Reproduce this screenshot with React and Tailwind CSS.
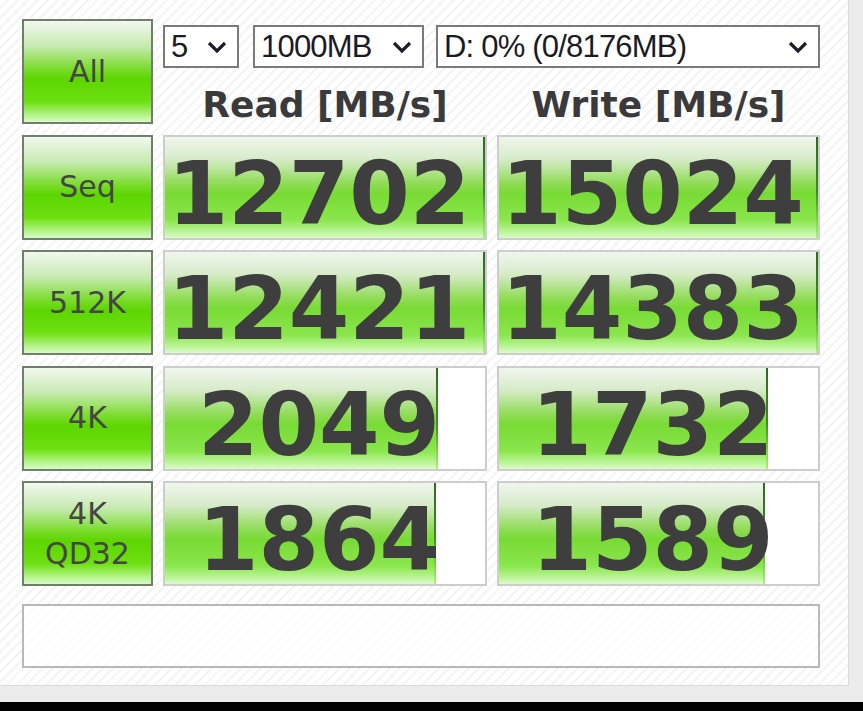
import React from "react";

const rows = [
    { label: ["Seq"], read: "12702", write: "15024", rw: 100, ww: 100 },
    { label: ["512K"], read: "12421", write: "14383", rw: 100, ww: 100 },
    { label: ["4K"], read: "2049", write: "1732", rw: 85.4, ww: 84.2 },
    { label: ["4K", "QD32"], read: "1864", write: "1589", rw: 84.6, ww: 83.5 },
];

function Chevron() {
    return (
        <svg width="20" height="12" viewBox="0 0 20 12" className="shrink-0">
            <polyline points="2,2 10,10 18,2" fill="none" stroke="#1e1e2a" strokeWidth="3.2" />
        </svg>
    );
}

function Select({ value, className }) {
    return (
        <div className={"flex h-[43px] items-center justify-between border-2 border-[#7a7a7a] bg-white pl-[6px] pr-[10px] " + className}>
            <span className="text-[31px] leading-none tracking-[-0.8px] text-[#1b1b24] font-['Liberation_Sans',sans-serif]">{value}</span>
            <Chevron />
        </div>
    );
}

function GreenButton({ lines }) {
    return (
        <div className="flex h-[105px] flex-col items-center justify-center border-2 border-[#6f7f6b] bg-[linear-gradient(180deg,#f2f8ef_0%,#c6eab0_25%,#78dc28_48%,#5cd600_58%,#6ee012_80%,#b9f591_94%,#d8fbc4_100%)] text-[30px] leading-[40px] text-[#454545] font-['DejaVu_Sans',sans-serif]">
            {lines.map((l) => (
                <span key={l}>{l}</span>
            ))}
        </div>
    );
}

function Result({ value, width }) {
    return (
        <div className="relative h-[105px] border-2 border-[#cdcdcd] bg-white">
            <div
                className="absolute left-0 top-0 h-full bg-[linear-gradient(180deg,#f1f6ee_0%,#d6ebc8_22%,#8fdc56_46%,#78db34_56%,#8ae64c_82%,#bdf59a_94%,#dcfbc8_100%)]"
                style={{ width: width + "%" }}
            >
                <div className="absolute right-0 top-0 h-full w-[2px] bg-[linear-gradient(180deg,#2f6a22_0%,#3f8a2a_55%,#7ce040_85%,#a8f07a_100%)]" />
            </div>
            <div className="relative flex h-full items-center justify-center pr-[12px] pt-[14px] text-[87px] font-bold leading-none text-[#3e3e3e] font-['DejaVu_Sans',sans-serif]">
                {value}
            </div>
        </div>
    );
}

export default function App() {
    return (
        <div className="flex h-[711px] w-[863px] flex-col bg-black">
            <div className="flex h-[702px] bg-[#ececec]">
                <div className="h-[686px] w-[849px] border-r border-b border-[#dadada] bg-[repeating-linear-gradient(135deg,#ffffff_0px,#ffffff_5px,#f4f4f4_5px,#f4f4f4_7px)] pl-[22px] pt-[19px]">
                    <div className="grid w-[798px] grid-cols-[131px_324px_323px] gap-x-[10px] gap-y-[10.5px]">
                        <GreenButton lines={["All"]} />
                        <div className="col-span-2 flex h-[105px] flex-col pt-[6px]">
                            <div className="flex items-center">
                                <Select value="5" className="w-[76px]" />
                                <Select value="1000MB" className="ml-[14px] w-[171px]" />
                                <Select value="D: 0% (0/8176MB)" className="ml-[12px] flex-1" />
                            </div>
                            <div className="flex flex-1 items-center pt-[18px] text-[36px] font-bold leading-none text-[#3a3a3a] font-['DejaVu_Sans',sans-serif]">
                                <div className="w-[324px] text-center">Read [MB/s]</div>
                                <div className="ml-[10px] w-[323px] text-center">Write [MB/s]</div>
                            </div>
                        </div>
                        {rows.map((r) => (
                            <React.Fragment key={r.label.join()}>
                                <GreenButton lines={r.label} />
                                <Result value={r.read} width={r.rw} />
                                <Result value={r.write} width={r.ww} />
                            </React.Fragment>
                        ))}
                    </div>
                    <div className="mt-[18px] h-[64px] w-[798px] border-2 border-[#b8b8b8] bg-white/60" />
                </div>
            </div>
        </div>
    );
}
